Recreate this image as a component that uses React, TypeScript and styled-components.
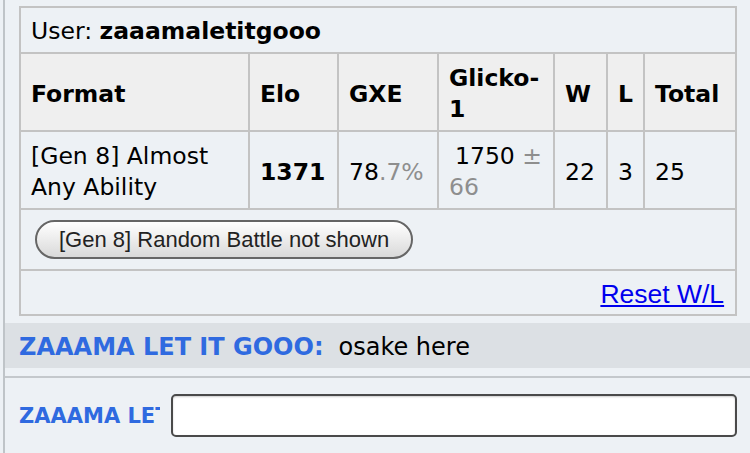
import React from "react";
import styled, { createGlobalStyle } from "styled-components";

const Global = createGlobalStyle`
  html, body { margin: 0; padding: 0; background: #edf1f5; }
  body { font-family: "DejaVu Sans", Verdana, sans-serif; color: #000; overflow: hidden; }
`;

const Page = styled.div`
  width: 750px;
  height: 453px;
  box-sizing: border-box;
  margin-left: 3px;
  border-left: 2px solid #bfc4c8;
  display: flex;
  flex-direction: column;
  overflow: hidden;
`;

const StatsArea = styled.div`
  padding: 6px 0 7px 14px;
`;

const Table = styled.table`
  width: 716px;
  border-collapse: collapse;
  table-layout: fixed;
  font-size: 23.5px;
  line-height: 31px;
  border: 2px solid #bcbcbc;
`;

const Cell = styled.td<{ $head?: boolean; $pad?: string; $align?: string }>`
  border: 2px solid #c3c3c3;
  padding: ${(p) => p.$pad ?? "9px 10px 5px"};
  background: ${(p) => (p.$head ? "#efefef" : "transparent")};
  font-weight: ${(p) => (p.$head ? "bold" : "normal")};
  text-align: ${(p) => p.$align ?? "left"};
  vertical-align: middle;
`;

const Muted = styled.span`
  color: #8e8e8e;
`;

const NoWrap = styled.span`
  white-space: nowrap;
`;

const Rating = styled.span`
  padding-left: 6px;
`;

const PillButton = styled.button`
  font-family: "Liberation Sans", Arial, sans-serif;
  font-size: 22px;
  color: #222;
  height: 39px;
  padding: 0 22px;
  border: 2px solid #666;
  border-radius: 20px;
  background: linear-gradient(#ffffff, #d9d9d9);
  box-shadow: inset 0 1px 0 #fff;
`;

const ResetLink = styled.a`
  font-family: "Liberation Sans", Arial, sans-serif;
  font-size: 26.5px;
  line-height: 30px;
  color: #0000ee;
  text-decoration: underline;
`;

const MessageBar = styled.div`
  height: 45px;
  background: #dce0e4;
  display: flex;
  align-items: center;
  padding: 3px 0 0 14px;
  box-sizing: border-box;
  font-size: 24px;
  gap: 15px;
`;

const Name = styled.strong<{ $size?: number }>`
  color: #2f6ae0;
  font-size: ${(p) => p.$size ?? 24}px;
  white-space: nowrap;
`;

const Composer = styled.div`
  margin-top: 8px;
  border-top: 2px solid #c4c8cc;
  display: flex;
  align-items: center;
  padding: 16px 0 0 14px;
  gap: 11px;
`;

const LabelClip = styled.div`
  width: 141px;
  overflow: hidden;
  flex-shrink: 0;
`;

const Input = styled.input`
  width: 566px;
  height: 43px;
  box-sizing: border-box;
  border: 2px solid #4a4a4a;
  border-radius: 5px;
  background: #fff;
  box-shadow: inset 0 1px 2px rgba(0,0,0,0.2);
`;

export default function App() {
  return (
    <>
      <Global />
      <Page>
        <StatsArea>
          <Table>
            <colgroup>
              <col style={{ width: 229 }} />
              <col style={{ width: 89 }} />
              <col style={{ width: 100 }} />
              <col style={{ width: 116 }} />
              <col style={{ width: 53 }} />
              <col style={{ width: 37 }} />
              <col style={{ width: 92 }} />
            </colgroup>
            <tbody>
              <tr>
                <Cell colSpan={7} $pad="8px 10px 5px">
                  User: <strong>zaaamaletitgooo</strong>
                </Cell>
              </tr>
              <tr>
                <Cell $head>Format</Cell>
                <Cell $head>Elo</Cell>
                <Cell $head>GXE</Cell>
                <Cell $head>Glicko-1</Cell>
                <Cell $head>W</Cell>
                <Cell $head>L</Cell>
                <Cell $head>Total</Cell>
              </tr>
              <tr>
                <Cell>[Gen 8] Almost Any Ability</Cell>
                <Cell>
                  <strong>1371</strong>
                </Cell>
                <Cell>
                  78<Muted>.7%</Muted>
                </Cell>
                <Cell>
                  <NoWrap>
                    <Rating>1750</Rating> <Muted>±</Muted>
                  </NoWrap>{" "}
                  <Muted>66</Muted>
                </Cell>
                <Cell>22</Cell>
                <Cell>3</Cell>
                <Cell>25</Cell>
              </tr>
              <tr>
                <Cell colSpan={7} $pad="10px 14px">
                  <PillButton>[Gen 8] Random Battle not shown</PillButton>
                </Cell>
              </tr>
              <tr>
                <Cell colSpan={7} $align="right" $pad="8px 11px 3px">
                  <ResetLink href="#">Reset W/L</ResetLink>
                </Cell>
              </tr>
            </tbody>
          </Table>
        </StatsArea>
        <MessageBar>
          <Name>ZAAAMA LET IT GOOO:</Name>
          <span>osake here</span>
        </MessageBar>
        <Composer>
          <LabelClip>
            <Name $size={21}>ZAAAMA LET IT GOOO</Name>
          </LabelClip>
          <Input />
        </Composer>
      </Page>
    </>
  );
}
